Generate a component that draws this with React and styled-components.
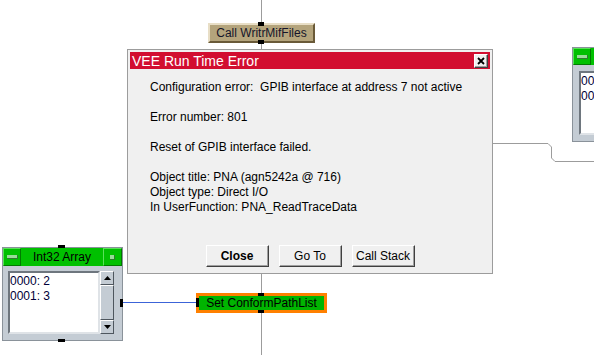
import React from "react";
import styled, { createGlobalStyle } from "styled-components";

const GlobalStyle = createGlobalStyle`
  html, body { margin: 0; padding: 0; background: #ffffff; }
  body { font-family: "Liberation Sans", Arial, sans-serif; }
`;

const Canvas = styled.div`
  position: relative;
  width: 594px;
  height: 355px;
  overflow: hidden;
  background: #ffffff;
  font-family: "Liberation Sans", Arial, sans-serif;
  font-size: 12px;
`;

const Wires = styled.svg`
  position: absolute;
  left: 0;
  top: 0;
  width: 594px;
  height: 355px;
`;

const Pin = styled.div`
  position: absolute;
  left: ${(p) => p.$x}px;
  top: ${(p) => p.$y}px;
  width: ${(p) => p.$w}px;
  height: ${(p) => p.$h}px;
  background: #000;
`;

const NodeSlot = styled.div`
  position: absolute;
  left: ${(p) => p.$left}px;
  top: ${(p) => p.$top}px;
`;

const CallNode = styled.div`
  box-sizing: border-box;
  width: 107px;
  height: 20px;
  background: #b4a47c;
  border: 2px solid;
  border-color: #e8dec6 #6a5a38 #6a5a38 #e8dec6;
  display: flex;
  align-items: center;
  justify-content: center;
  color: #15152a;
  font-size: 12px;
  white-space: nowrap;
`;

const SetNode = styled.div`
  box-sizing: border-box;
  width: 131px;
  height: 20px;
  background: #00b400;
  border: 3px solid #ff8000;
  display: flex;
  align-items: center;
  justify-content: center;
  color: #000;
  font-size: 12px;
  white-space: nowrap;
`;

const Widget = styled.div`
  box-sizing: border-box;
  width: ${(p) => p.$w}px;
  height: ${(p) => p.$h}px;
  background: #c4ccd4;
  border: 1px solid #8a929a;
  display: flex;
  flex-direction: column;
`;

const WidgetTitle = styled.div`
  height: ${(p) => p.$h}px;
  flex: none;
  background: #00c000;
  display: grid;
  grid-template-columns: 18px 1fr 19px;
  align-items: stretch;
`;

const TitleBtn = styled.div`
  box-sizing: border-box;
  border-left: 1px solid #5ae05a;
  border-top: 1px solid #5ae05a;
  border-right: 1px solid #007a00;
  border-bottom: 1px solid #007a00;
  display: flex;
  align-items: center;
  justify-content: center;
`;

const MinusIcon = styled.span`
  display: block;
  width: 10px;
  height: 3px;
  background: #98dc98;
  border-bottom: 1px solid #2e7a2e;
  border-right: 1px solid #2e7a2e;
`;

const SquareIcon = styled.span`
  display: block;
  width: 4px;
  height: 4px;
  background: #98dc98;
  border-bottom: 1px solid #2e7a2e;
  border-right: 1px solid #2e7a2e;
`;

const TitleText = styled.div`
  display: flex;
  align-items: center;
  justify-content: center;
  color: #000;
  font-size: 12px;
  white-space: nowrap;
`;

const WidgetBody = styled.div`
  flex: 1;
  display: flex;
  padding: ${(p) => p.$pad};
`;

const ListBox = styled.div`
  box-sizing: border-box;
  width: ${(p) => p.$w}px;
  height: ${(p) => p.$h}px;
  flex: none;
  background: #ffffff;
  border: 2px solid;
  border-color: #6e767e #dfe3e7 #dfe3e7 #6e767e;
  padding: ${(p) => p.$pt}px 0 0 0;
  color: #000038;
  font-size: 12px;
  line-height: 15px;
  white-space: nowrap;
  overflow: hidden;
`;

const ScrollBar = styled.div`
  width: 14px;
  flex: none;
  display: flex;
  flex-direction: column;
`;

const ScrollBtn = styled.div`
  box-sizing: border-box;
  height: ${(p) => p.$h}px;
  flex: ${(p) => (p.$grow ? 1 : "none")};
  background: #c4ccd4;
  border: 1px solid;
  border-color: #ffffff #4e565e #4e565e #ffffff;
  display: flex;
  align-items: center;
  justify-content: center;
`;

const Dialog = styled.div`
  position: absolute;
  left: 127px;
  top: 49px;
  width: 366px;
  height: 225px;
  box-sizing: border-box;
  border: 1px solid #9c9c9c;
  padding: 2px;
  background: #f0f0f0;
  display: flex;
  flex-direction: column;
`;

const DialogTitle = styled.div`
  height: 17px;
  flex: none;
  background: #d20e30;
  display: flex;
  align-items: center;
  justify-content: space-between;
  padding: 0 2px 0 2px;
  color: #ffffff;
  font-size: 14px;
`;

const CloseBox = styled.div`
  box-sizing: border-box;
  width: 14px;
  height: 14px;
  background: #f0f0f0;
  border: 1px solid;
  border-color: #ffffff #404040 #404040 #ffffff;
  box-shadow: inset -1px -1px #a0a0a0;
  display: flex;
  align-items: center;
  justify-content: center;
`;

const DialogBody = styled.div`
  flex: 1;
  padding: 11px 0 0 20px;
  color: #000;
  font-size: 12px;
  line-height: 15px;
`;

const Line = styled.div`
  height: 15px;
  white-space: pre;
`;

const ButtonRow = styled.div`
  display: flex;
  justify-content: center;
  gap: 10px;
  padding-bottom: 4px;
`;

const Button = styled.button`
  box-sizing: border-box;
  width: 63px;
  height: 22px;
  padding: 0;
  background: #f0f0f0;
  border: 1px solid;
  border-color: #ffffff #404040 #404040 #ffffff;
  box-shadow: inset -1px -1px #a0a0a0;
  font-family: "Liberation Sans", Arial, sans-serif;
  font-size: 12px;
  font-weight: ${(p) => (p.$bold ? 700 : 400)};
  color: #000;
`;

const Arrow = ({ up }) => (
  <svg width="7" height="4" viewBox="0 0 7 4">
    <polygon points={up ? "3.5,0 7,4 0,4" : "0,0 7,0 3.5,4"} fill="#000" />
  </svg>
);

const XGlyph = () => (
  <svg width="8" height="8" viewBox="0 0 8 8">
    <path d="M1 1 L7 7 M7 1 L1 7" stroke="#000" strokeWidth="1.8" />
  </svg>
);

const dialogLines = [
  "Configuration error:  GPIB interface at address 7 not active",
  "",
  "Error number: 801",
  "",
  "Reset of GPIB interface failed.",
  "",
  "Object title: PNA (agn5242a @ 716)",
  "Object type: Direct I/O",
  "In UserFunction: PNA_ReadTraceData",
];

export default function App() {
  return (
    <>
      <GlobalStyle />
      <Canvas>
        <Wires viewBox="0 0 594 355">
          <line x1="261.5" y1="0" x2="261.5" y2="355" stroke="#9c9c9c" strokeWidth="1" />
          <line x1="123" y1="302.5" x2="196" y2="302.5" stroke="#3c64d8" strokeWidth="1" />
          <path
            d="M420 143.5 L548 143.5 L551.5 147 L551.5 158 L555 161.5 L594 161.5"
            fill="none"
            stroke="#9c9c9c"
            strokeWidth="1"
          />
        </Wires>

        <NodeSlot $left={208} $top={23}>
          <CallNode>Call WritrMifFiles</CallNode>
        </NodeSlot>
        <Pin $x={258} $y={22} $w={6} $h={4} />
        <Pin $x={258} $y={40} $w={6} $h={4} />

        <NodeSlot $left={196} $top={293}>
          <SetNode>Set ConformPathList</SetNode>
        </NodeSlot>
        <Pin $x={258} $y={293} $w={6} $h={3} />
        <Pin $x={258} $y={310} $w={6} $h={3} />
        <Pin $x={196} $y={298} $w={3} $h={9} />

        <NodeSlot $left={2} $top={247}>
          <Widget $w={121} $h={94}>
            <WidgetTitle $h={18}>
              <TitleBtn>
                <MinusIcon />
              </TitleBtn>
              <TitleText>Int32 Array</TitleText>
              <TitleBtn>
                <SquareIcon />
              </TitleBtn>
            </WidgetTitle>
            <WidgetBody $pad="5px 7px 6px 5px">
              <ListBox $w={92} $h={63} $pt={1}>
                <div>0000: 2</div>
                <div>0001: 3</div>
              </ListBox>
              <ScrollBar>
                <ScrollBtn $h={14}>
                  <Arrow up />
                </ScrollBtn>
                <ScrollBtn $grow />
                <ScrollBtn $h={14}>
                  <Arrow />
                </ScrollBtn>
              </ScrollBar>
            </WidgetBody>
          </Widget>
        </NodeSlot>
        <Pin $x={58} $y={245} $w={7} $h={3} />
        <Pin $x={58} $y={339} $w={7} $h={3} />
        <Pin $x={120} $y={299} $w={3} $h={8} />

        <NodeSlot $left={572} $top={47}>
          <Widget $w={60} $h={95}>
            <WidgetTitle $h={17}>
              <TitleBtn>
                <MinusIcon />
              </TitleBtn>
              <TitleText />
              <TitleBtn />
            </WidgetTitle>
            <WidgetBody $pad="6px 0 6px 6px">
              <ListBox $w={60} $h={64} $pt={1}>
                <div>0000</div>
                <div>0001</div>
              </ListBox>
            </WidgetBody>
          </Widget>
        </NodeSlot>

        <Dialog>
          <DialogTitle>
            <span>VEE Run Time Error</span>
            <CloseBox>
              <XGlyph />
            </CloseBox>
          </DialogTitle>
          <DialogBody>
            {dialogLines.map((t, i) => (
              <Line key={i}>{t}</Line>
            ))}
          </DialogBody>
          <ButtonRow>
            <Button $bold>Close</Button>
            <Button>Go To</Button>
            <Button>Call Stack</Button>
          </ButtonRow>
        </Dialog>
      </Canvas>
    </>
  );
}
